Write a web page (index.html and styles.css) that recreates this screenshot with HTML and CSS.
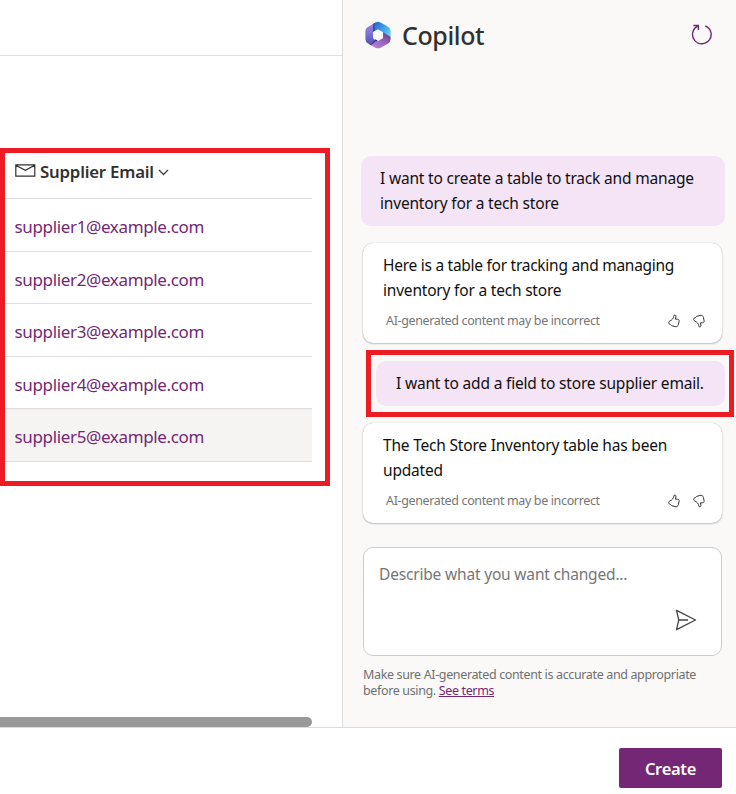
FILE: index.html
```html
<!DOCTYPE html>
<html lang="en">
<head>
<meta charset="utf-8">
<title>Copilot table designer</title>
<link rel="stylesheet" href="styles.css">
</head>
<body>
<svg class="defs" width="0" height="0" aria-hidden="true">
  <defs>
    <symbol id="thumb" viewBox="0 0 14 14">
      <path d="M7.300 1.100c1.100-.3 1.800.5 1.600 1.700L8.500 5.200h1.900c1.300 0 1.900.8 1.700 1.900l-.7 3.500c-.4 1.700-1.600 2.400-3.300 2L4.600 11.600C4 10.400 2.900 10.400 2 9.700 1.300 8.900 1.700 7.400 2.800 7 4.900 6.200 6.500 4.300 6.800 2.200z"/>
    </symbol>
  </defs>
</svg>
<div class="workspace">
  <main class="table-pane">
    <div class="toolbar"></div>
    <section class="column">
      <div class="column-head">
        <svg class="mail" width="21" height="13" viewBox="0 0 21 13"><path d="M.8.8h19v11.400H.8zM.8 1.200l9.500 5.100 9.500-5.100"/></svg>
        <span class="t t-head">Supplier Email</span>
        <svg class="chevron" width="11" height="7" viewBox="0 0 11 7"><path d="M1 1l4.500 4.500L10 1"/></svg>
      </div>
      <div class="row"><span class="t t-mail">supplier1@example.com</span></div>
      <div class="row"><span class="t t-mail">supplier2@example.com</span></div>
      <div class="row"><span class="t t-mail">supplier3@example.com</span></div>
      <div class="row"><span class="t t-mail">supplier4@example.com</span></div>
      <div class="row selected"><span class="t t-mail">supplier5@example.com</span></div>
    </section>
    <div class="scrollbar"></div>
  </main>
  <aside class="copilot">
    <header class="copilot-head">
      <svg class="logo" width="28" height="28" viewBox="0 0 28 28">
        <defs>
          <linearGradient id="ga" x1="0" y1="0" x2="0" y2="1"><stop offset="0" stop-color="#b07fe0"/><stop offset=".5" stop-color="#7c74d2"/><stop offset="1" stop-color="#5148ac"/></linearGradient>
          <linearGradient id="gb" x1="0" y1="0" x2="1" y2=".7"><stop offset="0" stop-color="#2166ba"/><stop offset=".45" stop-color="#3a8ee2"/><stop offset="1" stop-color="#5cd6f8"/></linearGradient>
          <linearGradient id="gc" x1="0" y1="1" x2="1" y2="0"><stop offset="0" stop-color="#c58bea"/><stop offset=".55" stop-color="#9562bb"/><stop offset="1" stop-color="#57388b"/></linearGradient>
          <clipPath id="hex"><path d="M11.500 1.500q2.500-1.300 5 0l7.500 4.200q2.600 1.500 2.600 4.300v8.300q0 2.700-2.400 4.100l-7.700 4.300q-2.500 1.300-5 0l-7.500-4.200q-2.600-1.500-2.600-4.200V10q0-2.700 2.500-4.100z"/></clipPath>
        </defs>
        <g clip-path="url(#hex)">
          <path fill="url(#ga)" d="M0 0h12L9 9v8l3 3-5 5H0z"/>
          <path fill="url(#gb)" d="M10.500 0H28v16.500l-9-5-5-3-5 2.500V5q0-3 1.500-5z"/>
          <path fill="url(#gc)" d="M28 16.500 19 11v6l-5 3-2.500-1-3 4.500L4 24v4h24z"/>
          <path fill="#2158ab" d="M9.800 2h1.400Q9.800 5 11 9.700L9 11V6q0-2.400.8-4z"/>
          <path fill="#352c87" d="M4.500 23.400q3.500 0 5.200-2.700l2-3 2.300 2-3 .8-2 2.300q-1.800 1.500-4.500.6z"/>
        </g>
        <path fill="#faf9f8" stroke="#faf9f8" stroke-width="1.500" stroke-linejoin="round" d="M14 9.300 18.200 11.700v4.700L14 18.800 9.800 16.400v-4.700z"/>
      </svg>
      <h1 class="t t-title">Copilot</h1>
      <svg class="refresh" width="22" height="22" viewBox="0 0 22 22"><path d="M7 2A9.300 9.300 0 1 0 14.200 1.800M2.400 1.500h5v4.600"/></svg>
    </header>
    <div class="bubble first"><p class="t t-ask">I want to create a table to track and manage</p><p class="t t-ask2">inventory for a tech store</p></div>
    <div class="card">
      <p class="t t-reply">Here is a table for tracking and managing</p><p class="t t-reply2">inventory for a tech store</p>
      <div class="note"><span class="t t-note">AI-generated content may be incorrect</span><svg class="up" width="14" height="14"><use href="#thumb"/></svg><svg class="down" width="14" height="14"><use href="#thumb"/></svg></div>
    </div>
    <div class="callout"><div class="bubble"><p class="t t-ask3">I want to add a field to store supplier email.</p></div></div>
    <div class="card">
      <p class="t t-reply3">The Tech Store Inventory table has been</p><p class="t t-reply4">updated</p>
      <div class="note"><span class="t t-note">AI-generated content may be incorrect</span><svg class="up" width="14" height="14"><use href="#thumb"/></svg><svg class="down" width="14" height="14"><use href="#thumb"/></svg></div>
    </div>
    <div class="prompt">
      <span class="t t-place">Describe what you want changed...</span>
      <svg class="send" width="22" height="22" viewBox="0 0 22 22"><path d="M1.500 1.300 20.500 11 1.500 20.700 3.800 11zM3.800 11H13"/></svg>
    </div>
    <div class="terms"><p class="t t-terms">Make sure AI-generated content is accurate and appropriate</p><p class="t t-terms2">before using. <a href="#">See terms</a></p></div>
  </aside>
</div>
<footer class="footer"><button class="create"><span class="t t-create">Create</span></button></footer>
</body>
</html>
```
FILE: styles.css
```css
* { box-sizing: border-box; }
body { margin: 0; width: 736px; height: 794px; overflow: hidden; background: #fff; font-family: "Noto Sans", "Open Sans", sans-serif; color: #111; }
p, h1 { margin: 0; }
.defs { display: block; }
.t { white-space: nowrap; }
svg { flex: none; fill: none; }
.workspace { display: grid; grid-template-columns: 342px 394px; height: 727px; }
.table-pane { display: flex; flex-direction: column; }
.toolbar { height: 56px; border-bottom: 1px solid #e1e1e1; }
.column { width: 330px; height: 338px; margin-top: 92px; border: 5px solid #ed1c24; padding-right: 13px; }
.column-head { display: flex; height: 46px; border-bottom: 1px solid #dcdcdc; padding-left: 10px; }
.mail { margin-top: 11px; stroke: #323130; stroke-width: 1.2; }
.chevron { margin: 16px 0 0 5px; stroke: #444; stroke-width: 1.4; }
.t-head { width: 113px; margin-left: 4px; font-size: 16.8px; font-weight: 600; line-height: 38px; letter-spacing: -.2px; color: #323130; }
.row { height: 52.6px; border-bottom: 1px solid #dedede; padding-left: 9.5px; line-height: 55px; font-size: 17px; color: #742774; }
.t-mail { letter-spacing: -.35px; }
.selected { background: #f5f4f3; border-top: 1px solid #ededed; line-height: 53px; }
.scrollbar { width: 312px; height: 10px; margin-top: auto; background: #999; border-radius: 0 5px 5px 0; }
.copilot { background: #faf9f8; border-left: 1px solid #dcdcdc; }
.copilot-head { display: flex; height: 156px; padding-left: 21px; }
.logo { margin-top: 21px; }
.t-title { margin-left: 10px; width: 277px; font-size: 25px; line-height: 70px; font-weight: 500; letter-spacing: -.4px; color: #323130; }
.refresh { margin: 24px 0 0 12px; stroke: #742774; stroke-width: 1.4; }
.bubble { background: #f5e3f6; border-radius: 10px; font-size: 15.5px; line-height: 25px; letter-spacing: -.18px; }
.first { width: 364px; height: 70px; margin-left: 18px; padding: 10px 0 0 19px; }
.card { width: 359px; height: 100px; margin: 17px 0 0 20px; padding: 10px 0 0 20px; background: #fff; border-radius: 10px; box-shadow: 0 0 1px rgba(0,0,0,.3), 0 1px 2px rgba(0,0,0,.22); font-size: 15.5px; line-height: 25px; letter-spacing: -.2px; }
.t-reply { letter-spacing: -.27px; }
.note { display: flex; height: 20px; margin-top: 8px; padding-left: 3px; line-height: 20px; }
.t-note { width: 281px; font-size: 12.5px; letter-spacing: -.36px; color: #767676; }
.note svg { stroke: #333; stroke-width: 1; margin-top: 3px; }
.note .down { transform: scaleY(-1); margin-left: 11px; }
.callout { width: 368px; height: 67px; margin: 7px 0 0 23px; padding: 6px 0 0 5px; border: 5px solid #ed1c24; }
.callout .bubble { width: 349px; height: 45px; padding: 10px 0 0 20px; }
.callout + .card { margin-top: 6px; }
.prompt { display: flex; width: 359px; height: 109px; margin: 24px 0 0 20px; padding-left: 15px; border: 1px solid #ccc; border-radius: 10px; background: #fff; }
.t-place { width: 296px; font-size: 15.5px; line-height: 52px; letter-spacing: -.18px; color: #767676; }
.send { margin-top: 61px; stroke: #444; stroke-width: 1.3; stroke-linejoin: round; }
.terms { margin: 11px 0 0 20px; font-size: 12.5px; line-height: 16px; letter-spacing: -.36px; color: #707070; }
.terms a { color: #742774; text-decoration: underline; }
.footer { height: 67px; border-top: 1px solid #dcdcdc; display: flex; justify-content: flex-end; padding: 20px 14px 0 0; }
.create { width: 103px; height: 40px; border: 0; border-radius: 2px; background: #742774; color: #fff; font: 600 16.5px "Noto Sans", sans-serif; letter-spacing: -.3px; padding: 0; }
```
